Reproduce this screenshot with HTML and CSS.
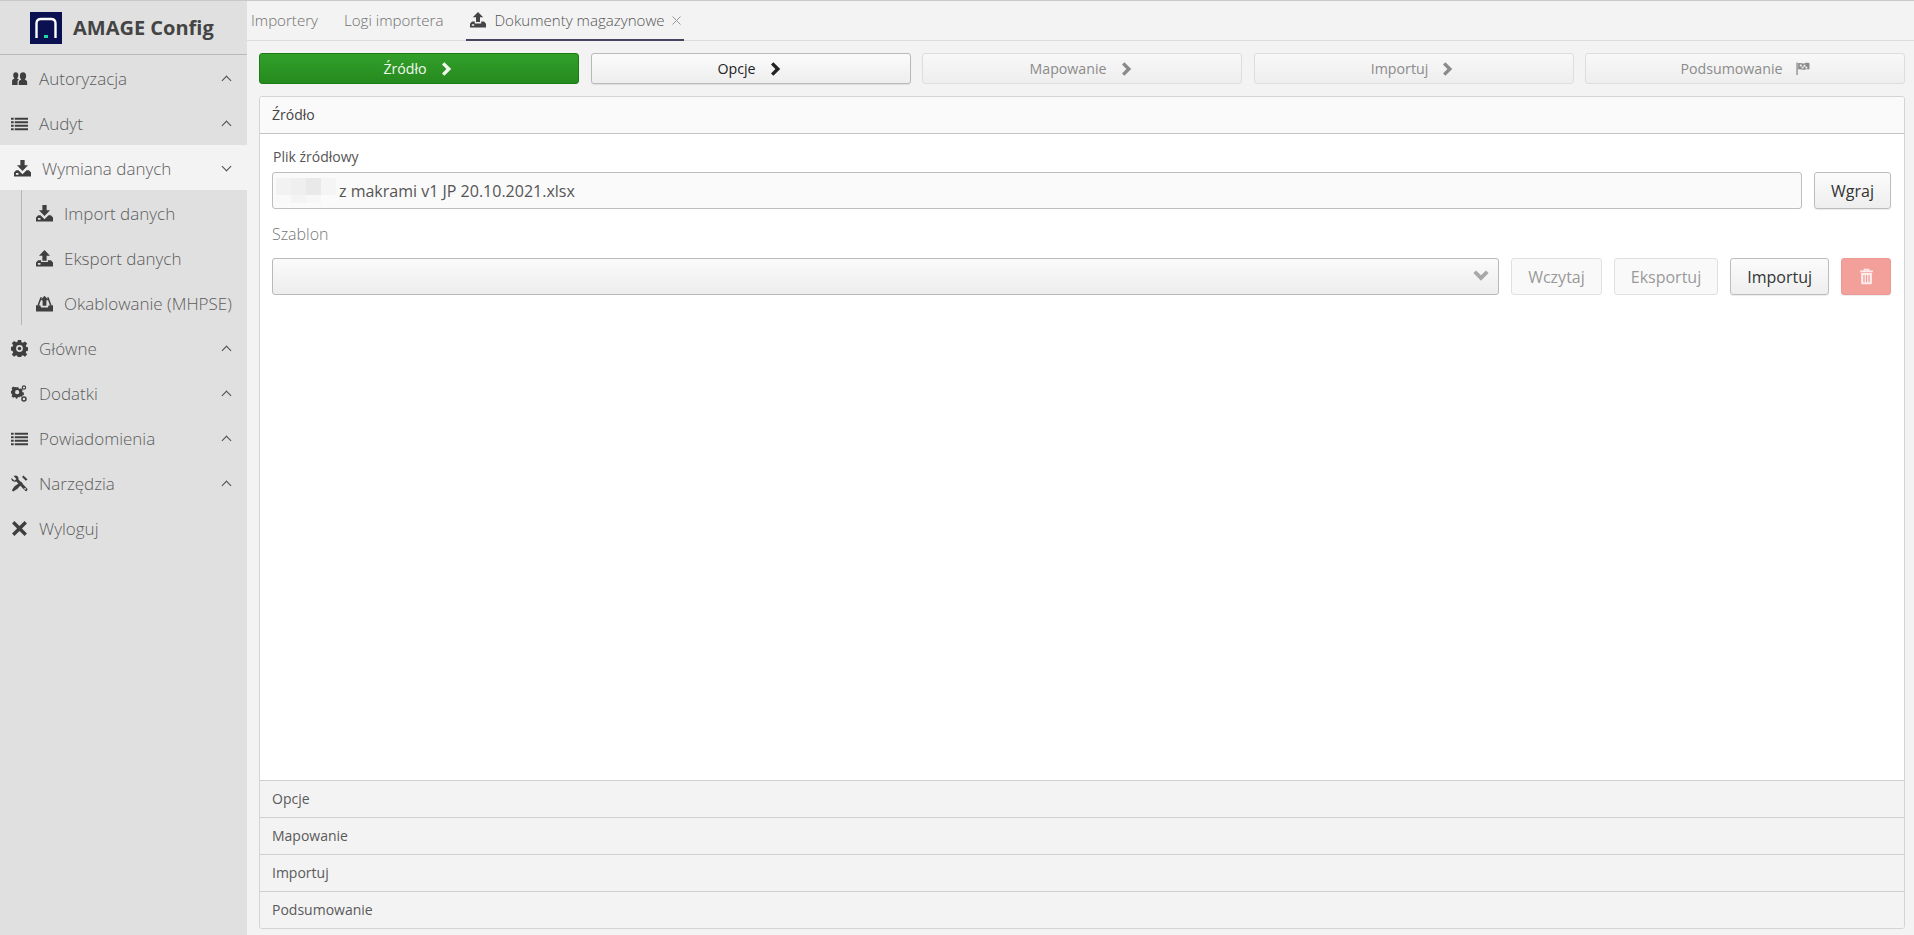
FILE: index.html
```html
<!DOCTYPE html>
<html lang="pl">
<head>
<meta charset="utf-8">
<title>AMAGE Config</title>
<link rel="stylesheet" href="styles.css">
</head>
<body>
<svg class="defs" width="0" height="0" aria-hidden="true">
  <defs>
    <symbol id="i-users" viewBox="0 0 16 16"><path d="M1 14v-3.500C1 9 2 8.600 3.300 8 2.300 7.200 2.100 6 2.100 4.800 2.100 3 3 2 4.500 2S6.900 3 6.900 4.800c0 1.200-.3 2.400-1.200 3.200.7.300 1.300.6 1.700 1-.8.500-1.200 1.200-1.200 2.200V14z"/><path d="M7.300 14v-2.600c0-1.300 1.100-1.700 2.400-2.400-1-.9-1.300-2-1.300-3.400C8.400 3.500 9.400 2.200 11.300 2.200s2.900 1.300 2.900 3.400c0 1.400-.3 2.500-1.300 3.400 1.300.7 2.300 1.100 2.300 2.400V14z"/></symbol>
    <symbol id="i-list" viewBox="0 0 16 16"><path d="M0 2.500h2.500v2H0zM3.500 2.500H16v2H3.500zM0 5.800h2.500v2H0zM3.500 5.800H16v2H3.500zM0 9.100h2.500v2H0zM3.500 9.100H16v2H3.500zM0 12.400h2.500v2H0zM3.500 12.400H16v2H3.500z"/></symbol>
    <symbol id="i-import" viewBox="0 0 16 16"><path d="M6 0h4v5h3.200L8 10.300 2.800 5H6z"/><path fill-rule="evenodd" d="M0 15.500V11.800L2 9.600h2.200l3.800 3.800 3.800-3.800H14l2 2.200v3.700zM1.800 12.300v1.500h2.400v-1.500z"/></symbol>
    <symbol id="i-export" viewBox="0 0 16 16"><path d="M8 0l5.200 5.300H10V10H6V5.300H2.800z"/><path fill-rule="evenodd" d="M0 15.500V11.800L2 9.600h2.800v1.800h6.400V9.600H14l2 2.200v3.700zM1.800 12.300v1.500h2.400v-1.500z"/></symbol>
    <symbol id="i-inbox" viewBox="0 0 16 16"><path d="M8 .6l4 4.400H9.800v5H6.200V5H4z"/><path d="M4.100 2.200h1.500L2.900 9.700H1.400zM10.400 2.200h1.500l2.700 7.500h-1.500z"/><path d="M0 9.700h3.900l1 2h6.200l1-2H16v5.800H0z"/></symbol>
    <symbol id="i-cog" viewBox="0 0 16 16"><path fill-rule="evenodd" d="M6.500 0h3l.4 2.200 1.300.6L13.100 1.500l2.100 2.100-1.300 1.900.6 1.300 2.200.4v3l-2.200.4-.6 1.300 1.300 1.900-2.100 2.100-1.900-1.300-1.300.6-.4 2.200h-3l-.4-2.200-1.300-.6-1.900 1.300-2.100-2.100 1.300-1.900-.6-1.300L-.7 9.900V6.800l2.200-.4.6-1.300L.8 3.200l2.100-2.100 1.900 1.300 1.300-.6zM8 5a3.200 3.200 0 1 0 0 6.400A3.200 3.200 0 0 0 8 5z" transform="translate(0 -.2)"/><circle cx="8" cy="8" r="1.700"/></symbol>
    <symbol id="i-cogs" viewBox="0 0 16 16"><path fill-rule="evenodd" d="M4.600 2h2.400l.3 1.300 1 .4 1.200-.7 1.600 1.600-.7 1.200.4 1 1.300.3v2.400l-1.300.3-.4 1-.1.200-1.500-.1-1 .6-1.200-.2-.6 1.100-.2 0-.3.600H4.600l-.3-1.300-1-.4-1.200.7L.5 10.500l.7-1.200-.4-1-1.300-.3V5.600l1.300-.3.400-1-.7-1.200 1.600-1.600 1.200.7 1-.4zM5.800 4.800a2 2 0 1 0 0 4 2 2 0 0 0 0-4z"/><path fill-rule="evenodd" d="M12.200.2a2.100 2.100 0 1 1 0 4.200 2.100 2.100 0 0 1 0-4.200zm0 1.100a1 1 0 1 0 0 2 1 1 0 0 0 0-2zM12.200 10.600a2.600 2.600 0 1 1 0 5.200 2.600 2.600 0 0 1 0-5.200zm0 1.400a1.200 1.200 0 1 0 0 2.400 1.200 1.200 0 0 0 0-2.400z"/></symbol>
    <symbol id="i-tools" viewBox="0 0 16 16"><path d="M.6 2.900 3.300 5.500l1.800-1.800L2.500.9C4.300-.1 6.300.4 6.900 2.300c.2.600.2 1.200 0 1.800l8.200 8.600c.6.700.6 1.300 0 2s-1.300.7-2 0L5 6.200C2.300 7 -.4 5.100.6 2.900zM12.400 13a.8.8 0 1 0 1.600 0 .8.8 0 0 0-1.600 0z" fill-rule="evenodd"/><path d="M11.700.4 15.600 4.300 13.900 5.500 10.400 1.800zM9.500 6.300l1.500 1.500-5.200 5.300-3.700 2.500-1.300-1.300 2.500-3.700z"/></symbol>
    <symbol id="i-x" viewBox="0 0 16 16"><path d="M3.200 1 8 5.700 12.800 1 15 3.200 10.300 8 15 12.800 12.800 15 8 10.300 3.200 15 1 12.800 5.700 8 1 3.200z"/></symbol>
    <symbol id="i-chevron" viewBox="0 0 16 16"><path d="M5.400 1.200 12.200 8l-6.800 6.800-2.400-2.400L7.400 8 3 3.600z"/></symbol>
    <symbol id="i-flag" viewBox="0 0 16 16"><path d="M1.500 1.500h1.400V15H1.500z"/><path fill-rule="evenodd" d="M3.400 2.400C6 1.400 7.800 3.300 10.400 2.400c1.700-.6 3.200-.6 5-.1V9c-1.800-.5-3.300-.4-5 .2-2.600.9-4.400-1-7 0zM5.100 3.800v2h2v-2zm4 .3v2h2v-2zm-2 2v2h2v-2zm4-.1v2h2v-2z"/></symbol>
    <symbol id="i-trash" viewBox="0 0 16 16"><path fill-rule="evenodd" d="M5.700 .8h4.600l.7 1.500h3v1.600H2V2.300h3zM6.600 2 6.300 2.300h3.400L9.400 2zM2.900 4.800h10.200v9.100c0 .9-.6 1.500-1.500 1.500H4.400c-.9 0-1.500-.6-1.500-1.500zM5 6.500v7h1.200v-7zm2.400 0v7h1.200v-7zm2.400 0v7H11v-7z"/></symbol>
    <symbol id="i-close" viewBox="0 0 9 9"><path d="M.5.500 8.500 8.500M8.500.500.500 8.500" fill="none" stroke="currentColor" stroke-width="1"/></symbol>
  </defs>
</svg>

<div class="app">
  <aside class="sidebar">
    <div class="brand">
      <svg class="logo" viewBox="0 0 32 32" aria-hidden="true">
        <rect width="32" height="32" fill="#0b1150"/>
        <path d="M6.500 26V11.500Q6.500 7 11 7H21Q25.500 7 25.500 11.500V26" fill="none" stroke="#fff" stroke-width="2.400"/>
        <rect x="14" y="23" width="4" height="3" fill="#1fd6a5"/>
      </svg>
      <span class="brand-name">AMAGE Config</span>
    </div>
    <nav class="nav">
      <a class="nav-item"><svg class="ico"><use href="#i-users"/></svg><span class="nav-label">Autoryzacja</span><span class="caret up"></span></a>
      <a class="nav-item"><svg class="ico"><use href="#i-list"/></svg><span class="nav-label">Audyt</span><span class="caret up"></span></a>
      <a class="nav-item open"><svg class="ico"><use href="#i-import"/></svg><span class="nav-label">Wymiana danych</span><span class="caret down"></span></a>
      <div class="subnav">
        <a class="nav-item sub"><svg class="ico"><use href="#i-import"/></svg><span class="nav-label">Import danych</span></a>
        <a class="nav-item sub"><svg class="ico"><use href="#i-export"/></svg><span class="nav-label">Eksport danych</span></a>
        <a class="nav-item sub"><svg class="ico"><use href="#i-inbox"/></svg><span class="nav-label">Okablowanie (MHPSE)</span></a>
      </div>
      <a class="nav-item"><svg class="ico"><use href="#i-cog"/></svg><span class="nav-label">Główne</span><span class="caret up"></span></a>
      <a class="nav-item"><svg class="ico"><use href="#i-cogs"/></svg><span class="nav-label">Dodatki</span><span class="caret up"></span></a>
      <a class="nav-item"><svg class="ico"><use href="#i-list"/></svg><span class="nav-label">Powiadomienia</span><span class="caret up"></span></a>
      <a class="nav-item"><svg class="ico"><use href="#i-tools"/></svg><span class="nav-label">Narzędzia</span><span class="caret up"></span></a>
      <a class="nav-item"><svg class="ico"><use href="#i-x"/></svg><span class="nav-label">Wyloguj</span></a>
    </nav>
  </aside>

  <main class="main">
    <div class="tabs">
      <a class="tab">Importery</a>
      <a class="tab">Logi importera</a>
      <a class="tab active"><svg class="tab-ico"><use href="#i-export"/></svg>Dokumenty magazynowe<svg class="tab-close"><use href="#i-close"/></svg></a>
    </div>

    <div class="content">
      <div class="steps">
        <button class="step done">Źródło<svg class="chev"><use href="#i-chevron"/></svg></button>
        <button class="step current">Opcje<svg class="chev"><use href="#i-chevron"/></svg></button>
        <button class="step">Mapowanie<svg class="chev"><use href="#i-chevron"/></svg></button>
        <button class="step">Importuj<svg class="chev"><use href="#i-chevron"/></svg></button>
        <button class="step">Podsumowanie<svg class="chev flag"><use href="#i-flag"/></svg></button>
      </div>

      <section class="accordion">
        <header class="acc-head first">Źródło</header>
        <div class="acc-body">
          <label class="field-label">Plik źródłowy</label>
          <div class="row">
            <div class="file-input">
              <span class="blur"><i></i><i></i><i></i><i></i><i></i><i></i><i></i><i></i></span>
              <span>z makrami v1 JP 20.10.2021.xlsx</span>
            </div>
            <button class="btn">Wgraj</button>
          </div>
          <div class="template-label">Szablon</div>
          <div class="row">
            <div class="select"><span class="select-arrow"><svg class="chev"><use href="#i-chevron"/></svg></span></div>
            <button class="btn disabled">Wczytaj</button>
            <button class="btn disabled">Eksportuj</button>
            <button class="btn">Importuj</button>
            <button class="btn danger"><svg class="trash"><use href="#i-trash"/></svg></button>
          </div>
        </div>
        <header class="acc-head">Opcje</header>
        <header class="acc-head">Mapowanie</header>
        <header class="acc-head">Importuj</header>
        <header class="acc-head">Podsumowanie</header>
      </section>
    </div>
  </main>
</div>
</body>
</html>
```

FILE: styles.css
```css
* { box-sizing: border-box; }
html, body { height: 100%; margin: 0; overflow: hidden; }
body {
  font-family: "Open Sans", "Noto Sans", sans-serif;
  color: #333;
  background: #f3f3f3;
}
.defs { position: absolute; }
.app {
  display: flex;
  height: 935px;
  border-top: 1px solid #c8c8c8;
}

/* Sidebar */
.sidebar { width: 247px; flex: none; background: #e0e0e0; }
.brand {
  display: flex;
  align-items: center;
  height: 54px;
  padding: 11px 0 11px 30px;
  border-bottom: 1px solid #b9b9b9;
  gap: 11px;
}
.logo { width: 32px; height: 32px; flex: none; }
.brand-name { font-size: 20px; font-weight: 700; color: #444; white-space: nowrap; }
.nav-item {
  display: flex;
  align-items: center;
  height: 45px;
  padding: 2px 15px 0 11px;
  color: #5c5c5c;
  font-size: 17px;
  font-weight: 300;
}
.nav-label { flex: 1; white-space: nowrap; }
.ico { width: 17px; height: 17px; flex: none; margin-right: 11px; fill: #3f3f3f; }
.nav-item.open { background: #f3f3f3; padding-left: 14px; }
.subnav { margin-left: 21px; border-left: 1px solid #b5b5b5; }
.nav-item.sub { padding-left: 14px; padding-right: 0; }
.caret {
  width: 7px;
  height: 7px;
  flex: none;
  margin-right: 2px;
  border-left: 1.6px solid #4a4a4a;
  border-top: 1.6px solid #4a4a4a;
}
.caret.up { transform: translateY(2px) rotate(45deg); }
.caret.down { transform: translateY(-2px) rotate(225deg); }

/* Tabs */
.main { flex: 1; min-width: 0; display: flex; flex-direction: column; }
.tabs {
  display: flex;
  height: 40px;
  padding-left: 4px;
  border-bottom: 1px solid #dcdcdc;
  gap: 26px;
}
.tab {
  display: flex;
  align-items: center;
  height: 40px;
  padding: 0 0 2px;
  font-size: 15.100px;
  font-weight: 300;
  color: #6f6f6f;
  white-space: nowrap;
}
.tab.active {
  margin-left: -3px;
  padding: 0 3px 0 4px;
  color: #555;
  border-bottom: 2px solid #45455f;
}
.tab-ico { width: 16px; height: 16px; margin-right: 8px; fill: #444; }
.tab-close { width: 9px; height: 9px; margin-left: 7px; color: #999; }

/* Content */
.content { flex: 1; display: flex; flex-direction: column; padding: 12px 9px 6px 12px; }
.steps { display: flex; gap: 11.500px; }
.step {
  flex: 1;
  height: 31px;
  display: flex;
  align-items: center;
  justify-content: center;
  gap: 12px;
  padding: 0;
  font: 14.200px "Open Sans", sans-serif;
  color: #8b8b8b;
  background: linear-gradient(#f8f8f8, #eeeeee);
  border: 1px solid #dddddd;
  border-radius: 3px;
}
.step.done {
  color: #f2f8f0;
  background: linear-gradient(#33a02a, #258a1e);
  border-color: #1c7a17;
}
.step.current {
  color: #222;
  background: linear-gradient(#fbfbfb, #eeeeee);
  border-color: #b9b9b9;
  box-shadow: 0 1px 1px rgba(0, 0, 0, .08);
}
.chev { width: 16px; height: 16px; fill: currentColor; flex: none; }
.step:not(.done):not(.current) .chev { fill: #8a8a8a; }
.chev.flag { width: 15px; height: 15px; }

/* Accordion */
.accordion {
  flex: 1;
  margin-top: 12px;
  display: flex;
  flex-direction: column;
  background: #fff;
  border: 1px solid #d4d4d4;
  border-radius: 3px;
  overflow: hidden;
}
.acc-head {
  flex: none;
  height: 37px;
  display: flex;
  align-items: center;
  padding: 0 0 2px 12px;
  font-size: 14px;
  color: #5a5a5a;
  background: #f3f3f3;
  border-top: 1px solid #d0d0d0;
}
.acc-head.first {
  color: #444;
  background: #fafafa;
  border-top: 0;
  border-bottom: 1px solid #c4c4c4;
}
.acc-body { flex: 1; padding: 11px 13px 0 12px; }
.field-label { display: block; height: 27px; padding-left: 1px; line-height: 24px; font-size: 14px; color: #555; }
.row { display: flex; gap: 12px; align-items: stretch; height: 37px; }
.file-input {
  flex: 1;
  display: flex;
  align-items: center;
  padding-left: 3px;
  font-size: 16px;
  color: #555;
  background: #fafafa;
  border: 1px solid #bdbdbd;
  border-radius: 3px;
}
.blur {
  display: grid;
  grid-template-columns: repeat(4, 15px);
  grid-template-rows: 17px 8px;
  margin-right: 3px;
}
.blur i:nth-child(1) { background: #f2f2f2; }
.blur i:nth-child(2) { background: #efefef; }
.blur i:nth-child(3) { background: #e9e9e9; }
.blur i:nth-child(4) { background: #f5f5f5; }
.blur i:nth-child(5) { background: #f9f9f9; }
.blur i:nth-child(6) { background: #f4f4f4; }
.blur i:nth-child(7) { background: #f7f7f7; }
.blur i:nth-child(8) { background: #fbfbfb; }
.template-label { height: 49px; padding-top: 13px; font-size: 16px; font-weight: 300; line-height: 24px; color: #777; }
.select {
  flex: 1;
  position: relative;
  background: linear-gradient(#fbfbfb, #ededed);
  border: 1px solid #b9b9b9;
  border-radius: 3px;
}
.select-arrow {
  position: absolute;
  right: 8px;
  top: 8px;
  width: 18px;
  height: 18px;
  transform: rotate(90deg);
  color: #a8a8a8;
}
.select-arrow .chev { width: 18px; height: 18px; }
.btn {
  flex: none;
  padding: 0 16px;
  font: 16px "Open Sans", sans-serif;
  color: #333;
  background: linear-gradient(#fbfbfb, #eeeeee);
  border: 1px solid #bdbdbd;
  border-radius: 3px;
  box-shadow: 0 1px 1px rgba(0, 0, 0, .08);
}
.btn.disabled { color: #999; background: #f9f9f9; border-color: #e0e0e0; box-shadow: none; }
.btn.danger {
  width: 50px;
  padding: 0;
  display: flex;
  align-items: center;
  justify-content: center;
  background: #f3a09b;
  border-color: #eb9a96;
}
.trash { width: 17px; height: 17px; fill: #fdeceb; }
```
